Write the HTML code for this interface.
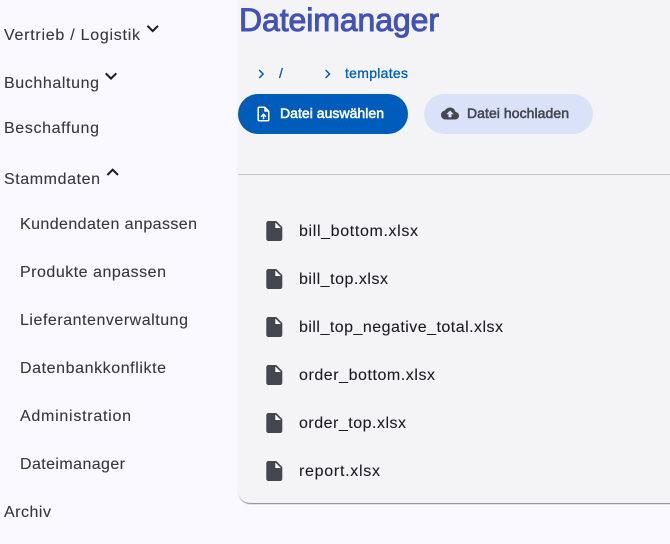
<!DOCTYPE html>
<html>
<head>
<meta charset="utf-8">
<style>
html,body{margin:0;padding:0;width:670px;height:544px;overflow:hidden;background:#f9f9ff}
svg{display:block;position:absolute;left:0;top:0}
#panel{position:absolute;left:238px;top:-8px;width:460px;height:511px;background:#f4f4f6;border-radius:12px;box-shadow:0 2px 1px -1px rgba(0,0,0,.4),0 1px 2px -1px rgba(0,0,0,.25)}
text{font-family:"Liberation Sans",sans-serif}
.n{font-size:16px;fill:#37393f;stroke:#37393f;stroke-width:.12px}
.f{font-size:16px;fill:#1b1c20;stroke:#1b1c20;stroke-width:.1px}
.b{font-size:14px;stroke-width:.55px}
.c{font-size:14px;fill:#005cbb;stroke:#005cbb;stroke-width:.3px}
.t{font-size:32px;fill:#4352b8;stroke:#4352b8;stroke-width:1px}
</style>
</head>
<body>
<div id="panel"></div>
<svg width="670" height="544" viewBox="0 0 670 544" xmlns="http://www.w3.org/2000/svg">
<text class="n" x="4" y="40" textLength="136">Vertrieb / Logistik</text>
<text class="n" x="4" y="88" textLength="95">Buchhaltung</text>
<text class="n" x="4" y="133" textLength="95">Beschaffung</text>
<text class="n" x="4" y="184" textLength="96">Stammdaten</text>
<text class="n" x="20" y="229" textLength="177">Kundendaten anpassen</text>
<text class="n" x="20" y="277" textLength="146">Produkte anpassen</text>
<text class="n" x="20" y="325" textLength="168">Lieferantenverwaltung</text>
<text class="n" x="20" y="373" textLength="146">Datenbankkonflikte</text>
<text class="n" x="20" y="421" textLength="111">Administration</text>
<text class="n" x="20" y="469" textLength="105">Dateimanager</text>
<text class="n" x="4" y="517" textLength="47">Archiv</text>
<g fill="#1b1c20">
<path transform="translate(140.7 16.5)" d="M16.59 8.59L12 13.17 7.41 8.59 6 10l6 6 6-6z"/>
<path transform="translate(99 64)" d="M16.59 8.59L12 13.17 7.41 8.59 6 10l6 6 6-6z"/>
<path transform="translate(100.7 160.3)" d="M12 8l-6 6 1.41 1.41L12 10.83l4.59 4.58L18 14z"/>
</g>

<text class="t" x="239" y="31" textLength="200">Dateimanager</text>

<g fill="#005cbb">
<path transform="translate(252.2 65) scale(.75)" d="M10 6L8.59 7.41 13.17 12l-4.58 4.59L10 18l6-6z"/>
<path transform="translate(318.6 65) scale(.75)" d="M10 6L8.59 7.41 13.17 12l-4.58 4.59L10 18l6-6z"/>
</g>
<text class="c" x="279" y="78">/</text>
<text class="c" x="345" y="78" textLength="63">templates</text>

<rect x="238" y="94" width="170" height="40" rx="20" fill="#005cbb"/>
<path fill="#fff" transform="translate(254.5 105) scale(.75)" d="M14 2H6c-1.100 0-2 .9-2 2v16c0 1.100.9 2 2 2h12c1.100 0 2-.9 2-2V8l-6-6zm4 18H6V4h7v5h5v11zM8 15.010l1.410 1.410L11 14.840V19h2v-4.160l1.590 1.590L16 15.010 12.010 11 8 15.010z"/>
<text class="b" x="280" y="118" fill="#fff" stroke="#fff" textLength="104">Datei auswählen</text>

<rect x="424" y="94" width="169" height="40" rx="20" fill="#dae2f9"/>
<path fill="#44474f" transform="translate(441 104.500) scale(.75)" d="M19.350 10.040C18.670 6.590 15.640 4 12 4 9.110 4 6.600 5.640 5.350 8.040 2.340 8.360 0 10.910 0 14c0 3.310 2.690 6 6 6h13c2.760 0 5-2.240 5-5 0-2.640-2.050-4.780-4.650-4.960zM14 13v4h-4v-4H7l5-5 5 5h-3z" fill-rule="evenodd"/>
<text class="b" x="467" y="118" fill="#44474f" stroke="#44474f" textLength="102">Datei hochladen</text>

<rect x="238" y="174" width="432" height="1" fill="#c4c6d0"/>

<defs>
<g id="fi">
<path fill="#44474f" d="M6 2c-1.100 0-1.990.9-1.990 2L4 20c0 1.100.89 2 1.990 2H18c1.100 0 2-.9 2-2V8l-6-6H6z"/>
<path fill="#fff" d="M13 9V3.500L18.500 9H13z"/>
</g>
</defs>
<use href="#fi" x="262.300" y="219"/>
<use href="#fi" x="262.300" y="267"/>
<use href="#fi" x="262.300" y="315"/>
<use href="#fi" x="262.300" y="363"/>
<use href="#fi" x="262.300" y="411"/>
<use href="#fi" x="262.300" y="459"/>
<text class="f" x="299" y="236" textLength="119">bill_bottom.xlsx</text>
<text class="f" x="299" y="284" textLength="89">bill_top.xlsx</text>
<text class="f" x="299" y="332" textLength="204">bill_top_negative_total.xlsx</text>
<text class="f" x="299" y="380" textLength="136">order_bottom.xlsx</text>
<text class="f" x="299" y="428" textLength="107">order_top.xlsx</text>
<text class="f" x="299" y="476" textLength="81">report.xlsx</text>
</svg>
</body>
</html>
